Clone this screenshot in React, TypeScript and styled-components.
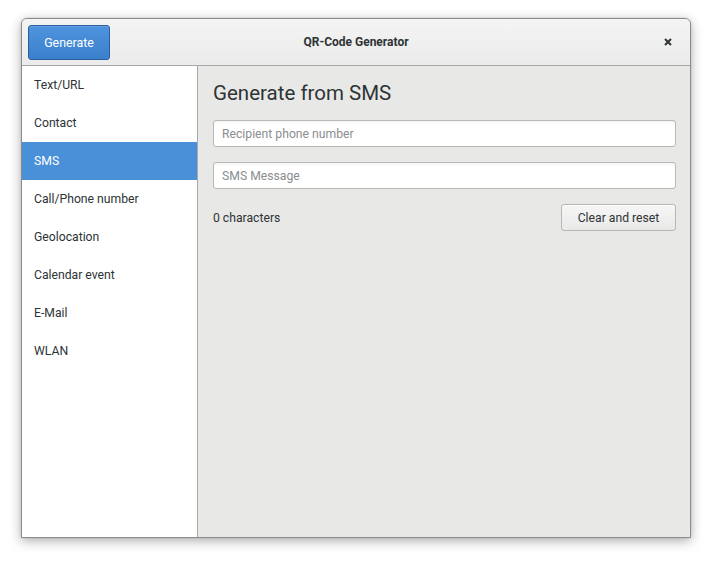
import React from "react";
import styled, { createGlobalStyle } from "styled-components";

const Global = createGlobalStyle`
  html, body { margin: 0; padding: 0; background: #ffffff; }
  body { font-family: Roboto, "Noto Sans", sans-serif; }
  * { box-sizing: border-box; }
`;

const Page = styled.div`
  padding: 18px 0 0 21px;
  min-height: 562px;
`;

const Window = styled.div`
  width: 670px;
  height: 520px;
  border: 1px solid #8c8c8c;
  border-radius: 6px 6px 0 0;
  display: flex;
  flex-direction: column;
  overflow: hidden;
  box-shadow: 0 3px 12px rgba(0, 0, 0, 0.32), 0 0 2px rgba(0, 0, 0, 0.15);
  background: #e8e8e7;
`;

const HeaderBar = styled.div`
  height: 47px;
  flex: none;
  display: grid;
  grid-template-columns: 1fr auto 1fr;
  align-items: center;
  padding: 0 6px;
  border-bottom: 1px solid #a8a8a8;
  background: linear-gradient(#f4f4f4, #ebebeb);
`;

const HeaderLeft = styled.div`
  display: flex;
  align-items: center;
`;

const HeaderRight = styled.div`
  display: flex;
  justify-content: flex-end;
  align-items: center;
`;

const SuggestedButton = styled.button`
  width: 82px;
  height: 35px;
  border: 1px solid #2a5d9e;
  border-radius: 3px;
  background: linear-gradient(#4d93dd, #3a80cc);
  color: #ffffff;
  font-family: Roboto, sans-serif;
  font-size: 12.4px;
  padding: 0;
  box-shadow: inset 0 1px rgba(255, 255, 255, 0.15);
`;

const Title = styled.div`
  font-size: 12px;
  font-weight: 700;
  color: #2e3436;
`;

const CloseButton = styled.div`
  width: 30px;
  height: 30px;
  display: flex;
  align-items: center;
  justify-content: center;
  margin-right: 1px;
`;

const Body = styled.div`
  flex: 1;
  display: flex;
  min-height: 0;
`;

const Sidebar = styled.div`
  width: 176px;
  flex: none;
  background: #ffffff;
  border-right: 1px solid #a8a8a8;
  display: flex;
  flex-direction: column;
`;

const SideItem = styled.div<{ $active?: boolean }>`
  height: 38px;
  display: flex;
  align-items: center;
  padding-left: 12px;
  font-size: 12.2px;
  color: ${(p) => (p.$active ? "#ffffff" : "#2e3436")};
  background: ${(p) => (p.$active ? "#4a90d9" : "transparent")};
`;

const Content = styled.div`
  flex: 1;
  padding: 14px 14px 0 15px;
  display: flex;
  flex-direction: column;
`;

const Heading = styled.h1`
  margin: 0 0 13px;
  font-size: 20.5px;
  font-weight: 400;
  line-height: 27px;
  color: #2e3436;
`;

const Entry = styled.input`
  height: 27px;
  width: 100%;
  border: 1px solid #b8b8b4;
  border-radius: 3px;
  background: linear-gradient(#f6f6f6, #ffffff 4px);
  padding: 0 8px;
  font-family: Roboto, sans-serif;
  font-size: 12.2px;
  color: #2e3436;
  margin-bottom: 15px;
  outline: none;
  &::placeholder { color: #8a8e8f; }
`;

const Row = styled.div`
  display: flex;
  align-items: center;
  justify-content: space-between;
`;

const Counter = styled.span`
  font-size: 12.2px;
  color: #2e3436;
`;

const PlainButton = styled.button`
  width: 115px;
  height: 27px;
  border: 1px solid #b6b6b3;
  border-radius: 3px;
  background: linear-gradient(#f6f6f6, #e9e9e8);
  font-family: Roboto, sans-serif;
  font-size: 12.2px;
  color: #2e3436;
  padding: 0;
  box-shadow: inset 0 1px #ffffff;
`;

const items = [
  "Text/URL",
  "Contact",
  "SMS",
  "Call/Phone number",
  "Geolocation",
  "Calendar event",
  "E-Mail",
  "WLAN",
];

export default function App() {
  return (
    <Page>
      <Global />
      <Window>
        <HeaderBar>
          <HeaderLeft>
            <SuggestedButton>Generate</SuggestedButton>
          </HeaderLeft>
          <Title>QR-Code Generator</Title>
          <HeaderRight>
            <CloseButton>
              <svg width="8" height="8" viewBox="0 0 8 8">
                <path d="M1 1 L7 7 M7 1 L1 7" stroke="#2e3436" strokeWidth="2" strokeLinecap="butt" />
              </svg>
            </CloseButton>
          </HeaderRight>
        </HeaderBar>
        <Body>
          <Sidebar>
            {items.map((t) => (
              <SideItem key={t} $active={t === "SMS"}>
                {t}
              </SideItem>
            ))}
          </Sidebar>
          <Content>
            <Heading>Generate from SMS</Heading>
            <Entry placeholder="Recipient phone number" />
            <Entry placeholder="SMS Message" />
            <Row>
              <Counter>0 characters</Counter>
              <PlainButton>Clear and reset</PlainButton>
            </Row>
          </Content>
        </Body>
      </Window>
    </Page>
  );
}
